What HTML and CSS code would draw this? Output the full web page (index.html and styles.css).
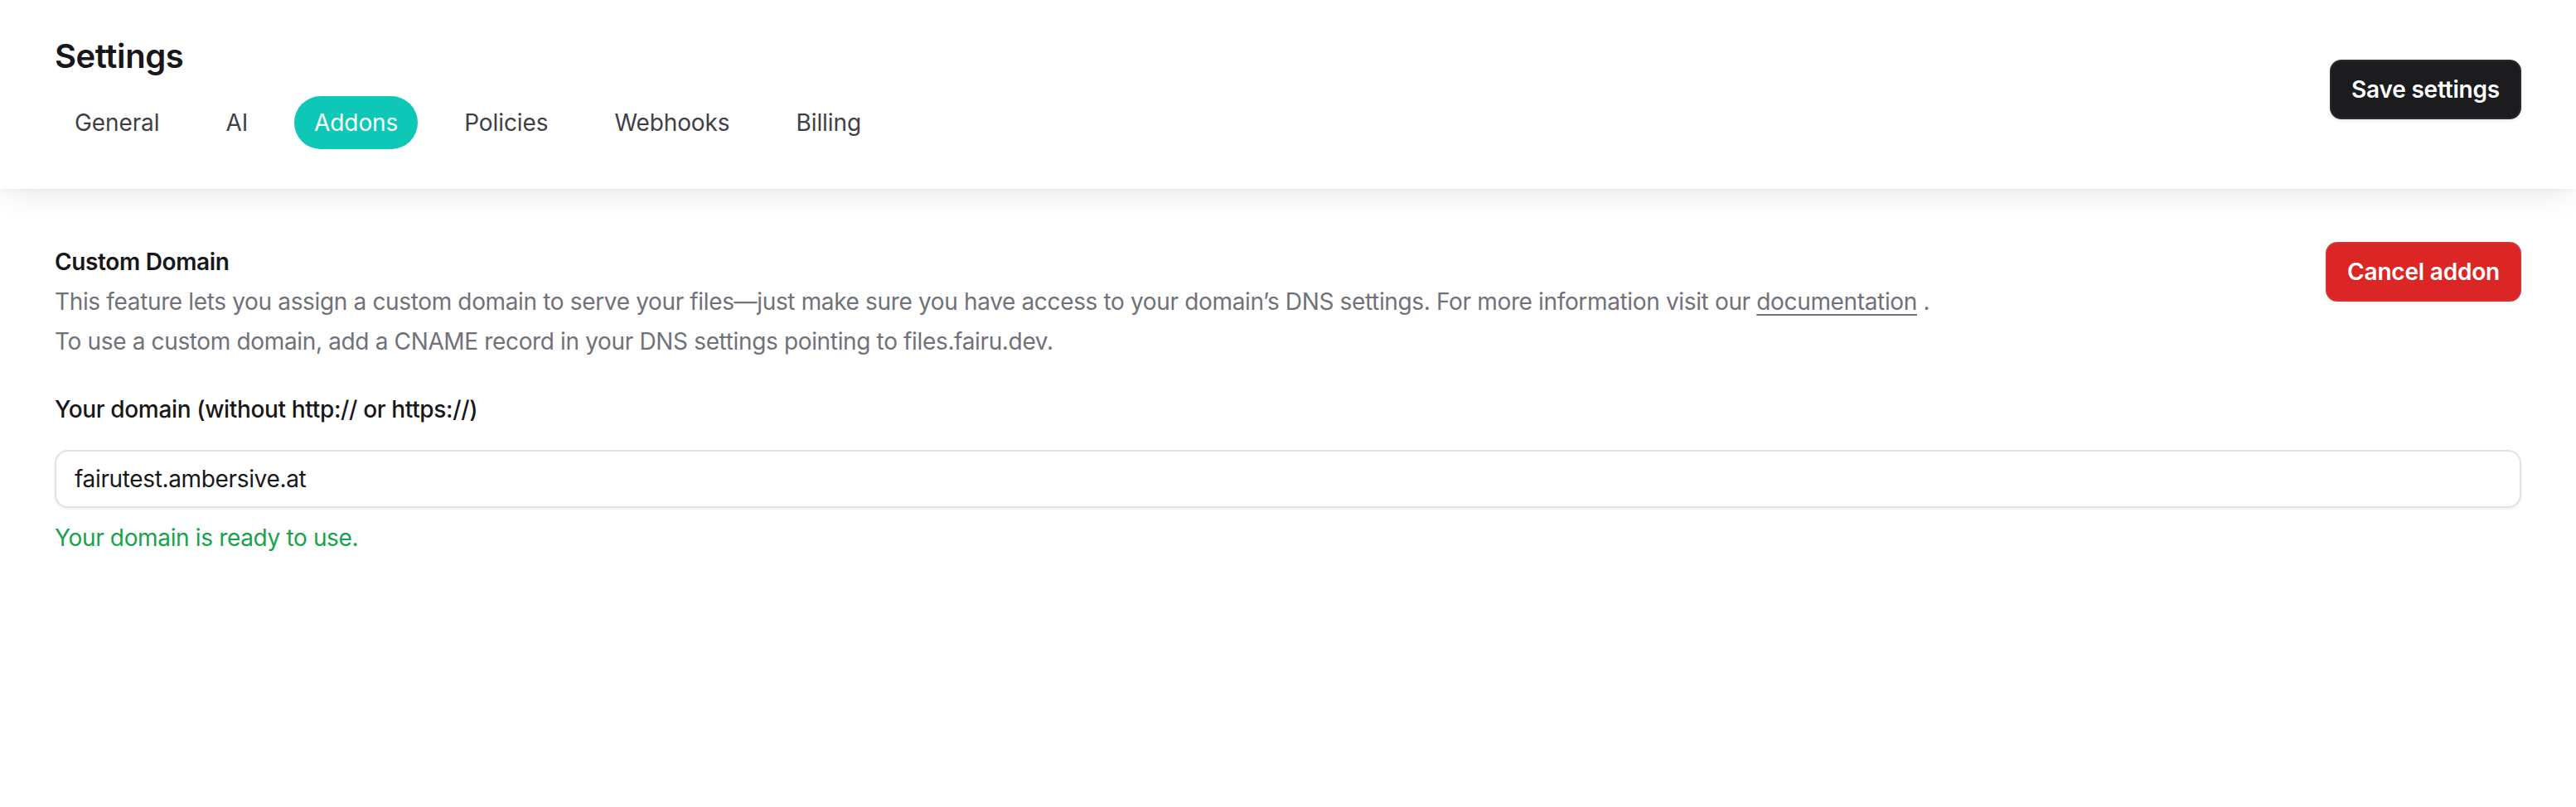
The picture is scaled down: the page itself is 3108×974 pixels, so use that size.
FILE: index.html
```html
<!DOCTYPE html>
<html lang="en">
<head>
<meta charset="utf-8">
<title>Settings</title>
<link rel="stylesheet" href="styles.css">
</head>
<body>
<header class="topbar">
  <div class="topbar-left">
    <h1 class="page-title">Settings</h1>
    <nav class="tabs">
      <a class="tab">General</a>
      <a class="tab">AI</a>
      <a class="tab tab-active">Addons</a>
      <a class="tab">Policies</a>
      <a class="tab">Webhooks</a>
      <a class="tab">Billing</a>
    </nav>
  </div>
  <button class="btn btn-dark">Save settings</button>
</header>
<main class="content">
  <section class="addon">
    <div class="addon-head">
      <div class="addon-info">
        <h2 class="addon-title">Custom Domain</h2>
        <p class="addon-desc">This feature lets you assign a custom domain to serve your files—just make sure you have access to your domain’s DNS settings. For more information visit our <a class="doc-link">documentation</a> .</p>
        <p class="addon-desc">To use a custom domain, add a CNAME record in your DNS settings pointing to files.fairu.dev.</p>
      </div>
      <button class="btn btn-red">Cancel addon</button>
    </div>
    <label class="field-label" for="domain">Your domain (without http:// or https://)</label>
    <input id="domain" class="field-input" type="text" value="fairutest.ambersive.at">
    <p class="field-ok">Your domain is ready to use.</p>
  </section>
</main>
</body>
</html>
```
FILE: styles.css
```css
* { box-sizing: border-box; }
html, body { margin: 0; padding: 0; background: #ffffff; }
body {
  font-family: Inter, "Noto Sans", "Liberation Sans", sans-serif;
  color: #18181b;
  letter-spacing: -0.35px;
  -webkit-font-smoothing: antialiased;
}
.topbar {
  position: relative;
  z-index: 2;
  height: 228px;
  padding: 40px 66px 0 66px;
  display: flex;
  justify-content: space-between;
  align-items: flex-start;
  background: #ffffff;
  box-shadow: 0 10px 36px -6px rgba(0, 0, 0, 0.10), 0 2px 6px rgba(0, 0, 0, 0.03);
}
.topbar-left { display: flex; flex-direction: column; }
.page-title {
  margin: 0;
  font-size: 40px;
  line-height: 56px;
  font-weight: 600;
  color: #18181b;
  letter-spacing: -0.4px;
}
.tabs {
  display: flex;
  gap: 32px;
  margin-top: 20px;
}
.tab {
  display: block;
  padding: 12px 24px;
  border-radius: 999px;
  font-size: 28px;
  line-height: 40px;
  font-weight: 400;
  color: #3f3f46;
  letter-spacing: -0.1px;
  cursor: pointer;
}
.tab-active {
  background: #0dc8b6;
  color: #ffffff;
}
.btn {
  font-family: inherit;
  font-size: 28px;
  line-height: 40px;
  font-weight: 600;
  color: #ffffff;
  padding: 14px 24px;
  border-radius: 14px;
  letter-spacing: -0.2px;
  cursor: pointer;
  white-space: nowrap;
}
.btn-dark {
  margin-top: 32px;
  background: #1c1c1f;
  border: 2px solid #2a2a2e;
  box-shadow: 0 2px 4px rgba(0, 0, 0, 0.08);
}
.btn-red {
  background: #dc2626;
  border: 2px solid #d23434;
  box-shadow: 0 2px 4px rgba(0, 0, 0, 0.06);
}
.content {
  padding: 64px 66px 0 66px;
}
.addon { display: flex; flex-direction: column; }
.addon-head {
  display: flex;
  justify-content: space-between;
  align-items: flex-start;
  gap: 40px;
}
.addon-title {
  margin: 0;
  font-size: 28px;
  line-height: 48px;
  font-weight: 600;
  color: #18181b;
}
.addon-desc {
  margin: 0;
  font-size: 28px;
  line-height: 48px;
  font-weight: 400;
  color: #71717a;
}
.doc-link {
  color: #71717a;
  text-decoration: underline;
  text-underline-offset: 5px;
  text-decoration-thickness: 2px;
  cursor: pointer;
}
.field-label {
  display: block;
  margin-top: 38px;
  font-size: 28px;
  line-height: 40px;
  font-weight: 500;
  color: #18181b;
}
.field-input {
  display: block;
  margin-top: 29px;
  width: 100%;
  height: 70px;
  padding: 13px 22px;
  border: 2px solid #e2e2e4;
  border-radius: 16px;
  font-family: inherit;
  font-size: 28px;
  line-height: 40px;
  letter-spacing: -0.35px;
  color: #18181b;
  background: #ffffff;
  box-shadow: 0 2px 3px rgba(0, 0, 0, 0.06);
  outline: none;
}
.field-ok {
  margin: 16px 0 0 0;
  font-size: 28px;
  line-height: 40px;
  color: #16a34a;
}
```
